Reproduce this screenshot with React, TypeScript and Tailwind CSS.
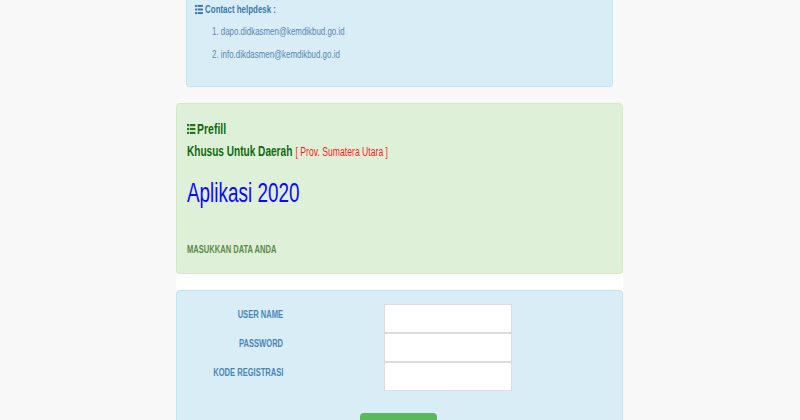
const squeeze = 'inline-block origin-left scale-x-[0.72] whitespace-nowrap'

function ListIcon({ className }: { className?: string }) {
  return (
    <svg viewBox="0 0 12 12" className={className} fill="currentColor">
      <rect x="0" y="1" width="3" height="2.2" />
      <rect x="4" y="1" width="8" height="2.2" />
      <rect x="0" y="4.9" width="3" height="2.2" />
      <rect x="4" y="4.9" width="8" height="2.2" />
      <rect x="0" y="8.8" width="3" height="2.2" />
      <rect x="4" y="8.8" width="8" height="2.2" />
    </svg>
  )
}

function FieldRow({ label, type = 'text' }: { label: string; type?: string }) {
  return (
    <div className="flex items-start">
      <div className="w-[106px] text-right pt-[3px] text-[10.5px] leading-[14px] font-bold text-[#4a86b8]">
        <span className="inline-block origin-right scale-x-[0.72] whitespace-nowrap">{label}</span>
      </div>
      <input
        type={type}
        className="ml-[101px] w-[128px] h-[29px] bg-white border border-[#dcdcdc] outline-none"
      />
    </div>
  )
}

export default function App() {
  return (
    <div className="h-screen bg-[#f8f8f8] font-['Liberation_Sans',Arial,sans-serif] overflow-hidden">
      <div className="w-[447px] ml-[176px] flex flex-col">
        {/* helpdesk box, top is cut off by the viewport */}
        <div className="mx-[10px] bg-[#d9edf7] border border-t-0 border-[#bce8f1] rounded-b px-2 pb-5">
          <div className="h-[18px] leading-[18px] text-[11px] font-bold text-[#3b79ad]">
            <span className={squeeze}>
              <ListIcon className="inline-block w-[11px] h-[11px] mr-[3px] -mt-[2px] align-middle" />
              Contact helpdesk :
            </span>
          </div>
          <ol className="mt-[2px] pl-[17px] text-[11px] leading-[23px] text-[#5788b3]">
            <li>
              <span className={squeeze}>1. dapo.didkasmen@kemdikbud.go.id</span>
            </li>
            <li>
              <span className={squeeze}>2. info.dikdasmen@kemdikbud.go.id</span>
            </li>
          </ol>
        </div>

        {/* prefill */}
        <div className="mt-4 bg-[#dff0d8] border border-[#d6e9c6] rounded px-[10px] pt-[15px] pb-[17px]">
          <div className="h-5 leading-5 text-[14.5px] font-bold text-[#0f6a0f]">
            <span className={squeeze}>
              <ListIcon className="inline-block w-[12px] h-[12px] mr-[2px] -mt-[2px] align-middle opacity-90" />
              Prefill
            </span>
          </div>
          <div className="mt-[2px] h-5 leading-5">
            <span className={squeeze}>
              <span className="text-[14px] font-bold text-[#0f6a0f]">Khusus Untuk Daerah</span>{' '}
              <span className="text-[12px] text-[#ff1a1a]">[ Prov. Sumatera Utara ]</span>
            </span>
          </div>
          <div className="mt-[14px] h-9 leading-9 text-[27px] text-[#0a0aff]">
            <span className="inline-block origin-left scale-x-[0.7] whitespace-nowrap">Aplikasi 2020</span>
          </div>
          <div className="mt-[31px] h-[14px] leading-[14px] text-[10.5px] font-bold text-[#5a8a48]">
            <span className={squeeze}>MASUKKAN DATA ANDA</span>
          </div>
        </div>

        <div className="h-4 bg-white" />

        {/* login form */}
        <div className="bg-[#d9edf7] border border-[#bce8f1] rounded-t pt-[13px] pb-6">
          <div className="flex flex-col">
            <FieldRow label="USER NAME" />
            <FieldRow label="PASSWORD" type="password" />
            <FieldRow label="KODE REGISTRASI" />
          </div>
          <div className="mt-[22px] flex">
            <button className="ml-[183px] w-[77px] h-[34px] bg-[#5cb85c] rounded text-white text-[12px] pt-4">
              Login
            </button>
          </div>
        </div>
      </div>
    </div>
  )
}
